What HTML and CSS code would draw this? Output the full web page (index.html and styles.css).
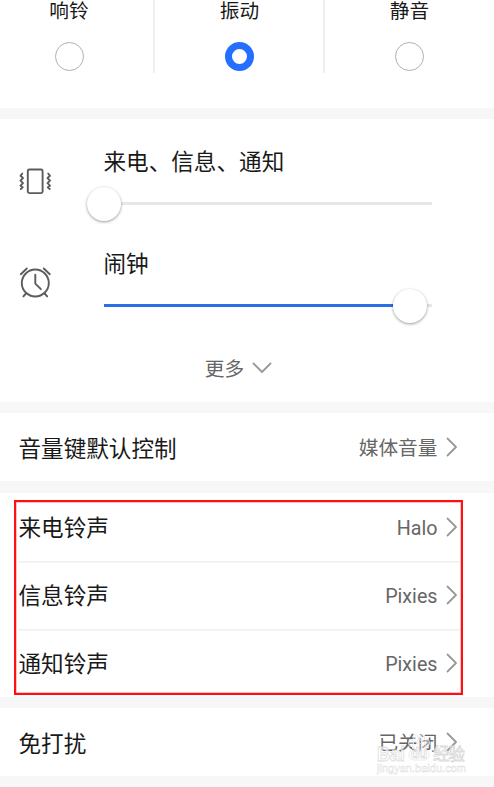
FILE: index.html
```html
<!DOCTYPE html>
<html lang="zh-CN">
<head>
    <meta charset="UTF-8">
    <meta name="viewport" content="width=device-width, initial-scale=1.0">
    <title>声音和振动</title>
    <link rel="stylesheet" href="styles.css">
</head>
<body>
    <div class="settings">
        <!-- Sound mode -->
        <div class="card modes">
            <div class="mode">
                <span>响铃</span>
                <i class="radio"></i>
            </div>
            <div class="mode">
                <span>振动</span>
                <i class="radio checked"></i>
            </div>
            <div class="mode">
                <span>静音</span>
                <i class="radio"></i>
            </div>
        </div>

        <!-- Volume sliders -->
        <div class="card volumes">
            <div class="volume">
                <svg class="volume-icon" viewBox="0 0 34 34">
                    <rect x="9.800" y="5.500" width="14.800" height="23.600" rx="1.500"/>
                    <path d="M4.300 9.500L2.500 11.800L5 14L2.500 16.600L5 19.200L2.500 21.700L4.700 23.300L2.800 25M30.200 9.500L32 11.800L29.500 14L32 16.600L29.500 19.200L32 21.700L29.800 23.300L31.700 25"/>
                </svg>
                <div class="volume-main">
                    <div class="title">来电、信息、通知</div>
                    <div class="slider">
                        <div class="fill" style="width: 0%"></div>
                        <div class="thumb"></div>
                    </div>
                </div>
            </div>
            <div class="volume">
                <svg class="volume-icon" viewBox="0 0 34 34">
                    <circle cx="17.300" cy="17" r="13.500"/>
                    <path d="M17.300 8.800v8.800l5.600 5.600M2.800 8.200l6-5.700M31.800 8.200l-6-5.700M8 27.500l-2.600 2.900M26.600 27.500l2.600 2.900"/>
                </svg>
                <div class="volume-main">
                    <div class="title">闹钟</div>
                    <div class="slider">
                        <div class="fill" style="width: 93.4%"></div>
                        <div class="thumb"></div>
                    </div>
                </div>
            </div>
            <div class="more">
                <span>更多</span>
                <svg class="arrow-down" viewBox="0 0 20 12"><path d="M1.500 1.500L10 10l8.500-8.500"/></svg>
            </div>
        </div>

        <div class="card">
            <div class="row">
                <span class="title">音量键默认控制</span>
                <span class="value">媒体音量</span>
                <svg class="arrow" viewBox="0 0 12 20"><path d="M1.500 1.500L10 10l-8.500 8.500"/></svg>
            </div>
        </div>

        <!-- Ringtones -->
        <div class="card ringtones">
            <div class="row">
                <span class="title">来电铃声</span>
                <span class="value">Halo</span>
                <svg class="arrow" viewBox="0 0 12 20"><path d="M1.500 1.500L10 10l-8.500 8.500"/></svg>
            </div>
            <div class="row">
                <span class="title">信息铃声</span>
                <span class="value">Pixies</span>
                <svg class="arrow" viewBox="0 0 12 20"><path d="M1.500 1.500L10 10l-8.500 8.500"/></svg>
            </div>
            <div class="row">
                <span class="title">通知铃声</span>
                <span class="value">Pixies</span>
                <svg class="arrow" viewBox="0 0 12 20"><path d="M1.500 1.500L10 10l-8.500 8.500"/></svg>
            </div>
            <div class="highlight"></div>
        </div>

        <div class="card">
            <div class="row">
                <span class="title">免打扰</span>
                <span class="value">已关闭</span>
                <svg class="arrow" viewBox="0 0 12 20"><path d="M1.500 1.500L10 10l-8.500 8.500"/></svg>
            </div>
        </div>
    </div>

    <!-- Watermark -->
    <svg class="watermark" viewBox="0 0 94 46">
        <g class="paw">
            <ellipse cx="37" cy="12" rx="2.500" ry="3.500"/>
            <ellipse cx="42" cy="7" rx="2.500" ry="3.500"/>
            <ellipse cx="48" cy="7" rx="2.500" ry="3.500"/>
            <ellipse cx="53" cy="12" rx="2.500" ry="3.500"/>
            <path d="M45 12c-4 0-5 4-8 7-4 4-2 10 3 10h10c5 0 7-6 3-10-3-3-4-7-8-7z"/>
        </g>
        <text class="brand" x="3" y="30" textLength="28" lengthAdjust="spacingAndGlyphs">Bai</text>
        <text class="brand small" x="37" y="27" textLength="16" lengthAdjust="spacingAndGlyphs">du</text>
        <text class="brand cjk" x="59" y="29" textLength="32">经验</text>
        <text class="url" x="3" y="41" textLength="89">jingyan.baidu.com</text>
    </svg>
</body>
</html>
```
FILE: styles.css
```css
* {
    margin: 0;
    padding: 0;
    box-sizing: border-box;
}

body {
    position: relative;
    width: 494px;
    height: 787px;
    overflow: hidden;
    background: #f7f7f7;
    color: #191919;
    font-family: Roboto, "Noto Sans CJK SC", sans-serif;
}

svg {
    fill: none;
    stroke-linecap: round;
    stroke-linejoin: round;
}

.settings {
    display: flex;
    flex-direction: column;
    gap: 11.4px;
}

.card {
    background: #fff;
}

/* Sound mode */
.modes {
    display: grid;
    grid-template-columns: 170px 170px 170px;
    height: 107.6px;
    margin-left: -16px;
}

.mode {
    display: flex;
    flex-direction: column;
    align-items: center;
    gap: 18px;
    height: 73px;
    font-size: 19.7px;
    line-height: 24px;
}

.mode + .mode {
    border-left: 2px solid #efefef;
    margin-left: -1px;
}

.radio {
    width: 29px;
    height: 29px;
    border: 1.500px solid #b0b0b0;
    border-radius: 50%;
}

.radio.checked {
    border: 7px solid #246fff;
}

/* Volume sliders */
.volumes {
    height: 283px;
    padding: 30px 62px 0 18px;
}

.volume {
    display: flex;
    gap: 51.5px;
    height: 102px;
}

.volume-icon {
    width: 34px;
    height: 34px;
    margin-top: 15px;
    stroke: #5c5c5c;
    stroke-width: 1.9;
}

.volume-main {
    flex: 1;
}

.title {
    padding-top: 2px;
    font-size: 22.6px;
    line-height: 24px;
}

.slider {
    display: flex;
    align-items: center;
    height: 34px;
    margin-top: 12px;
    background: linear-gradient(#e7e7e7, #e7e7e7) center / 100% 3px no-repeat;
}

.fill {
    height: 3px;
    background: #2b6fe8;
}

.thumb {
    flex: none;
    width: 34px;
    height: 34px;
    margin-left: -17px;
    border-radius: 50%;
    background: #fff;
    box-shadow: 0 1px 3px rgba(0, 0, 0, 0.4);
}

.more {
    display: flex;
    align-items: center;
    justify-content: center;
    gap: 8px;
    height: 30px;
    padding-left: 27px;
    color: #666;
    font-size: 19.7px;
    line-height: 26px;
}

.more span {
    padding-top: 4px;
}

.arrow-down {
    width: 20px;
    height: 12px;
    stroke: #999;
    stroke-width: 1.8;
}

/* Setting rows */
.row {
    display: flex;
    align-items: center;
    height: 68px;
    padding: 0 36px 0 18.500px;
}

.row .title {
    padding-top: 5px;
}

.value {
    margin-left: auto;
    padding-top: 4px;
    color: #666;
    font-size: 19.7px;
    line-height: 24px;
}

.arrow {
    width: 12px;
    height: 20px;
    margin-left: 8.500px;
    stroke: #999;
    stroke-width: 1.8;
}

.ringtones {
    position: relative;
}

.ringtones .row + .row {
    background: linear-gradient(#efefef, #efefef) 18px 0 / 442px 1.500px no-repeat;
}

.highlight {
    position: absolute;
    top: 7px;
    left: 14px;
    width: 449px;
    height: 195px;
    border: 2px solid #ff0f0f;
    box-shadow: inset 0 0 0 0.5px rgba(255, 15, 15, 0.5);
}

/* Watermark */
.watermark {
    position: absolute;
    left: 374px;
    top: 731px;
    width: 94px;
    height: 46px;
    fill: rgba(255, 255, 255, 0.65);
    stroke: #dadada;
    stroke-width: 0.8;
}

.paw {
    fill: rgba(255, 255, 255, 0.3);
    stroke: #e4e4e4;
}

.brand {
    font: bold 21px "Liberation Sans", sans-serif;
}

.brand.small {
    font-size: 15px;
}

.brand.cjk {
    font: 16.5px "Noto Sans CJK SC", sans-serif;
}

.url {
    font: 11px "Liberation Sans", sans-serif;
    stroke-width: 0.4;
}
```
